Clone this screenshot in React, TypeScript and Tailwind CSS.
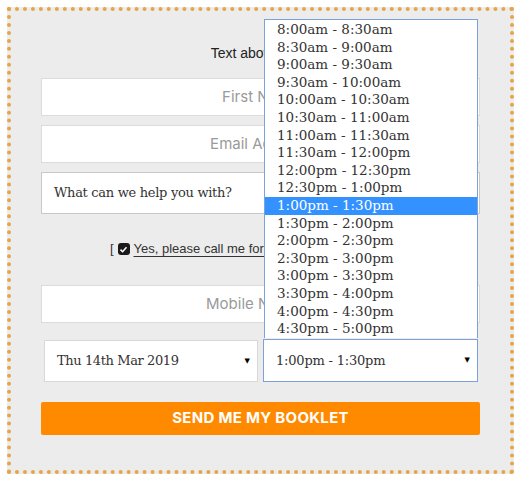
import { useState } from "react"

const slots = [
  "8:00am - 8:30am",
  "8:30am - 9:00am",
  "9:00am - 9:30am",
  "9:30am - 10:00am",
  "10:00am - 10:30am",
  "10:30am - 11:00am",
  "11:00am - 11:30am",
  "11:30am - 12:00pm",
  "12:00pm - 12:30pm",
  "12:30pm - 1:00pm",
  "1:00pm - 1:30pm",
  "1:30pm - 2:00pm",
  "2:00pm - 2:30pm",
  "2:30pm - 3:00pm",
  "3:00pm - 3:30pm",
  "3:30pm - 4:00pm",
  "4:00pm - 4:30pm",
  "4:30pm - 5:00pm",
]

const serif = "font-['DejaVu_Serif',serif]"
const sans = "font-['Inter',sans-serif]"

function Caret() {
  return <span className="text-[7px] leading-none text-black">▼</span>
}

export default function App() {
  const [slot, setSlot] = useState("1:00pm - 1:30pm")

  return (
    <div className="h-[481px] w-[520px] bg-white pl-[7px] pt-[7px]">
      <div className="relative h-[467px] w-[507px] border-4 border-dotted border-[#e6a548] bg-[#ececec] px-[30px]">
        <p className="mt-[34px] text-center font-['Liberation_Sans',sans-serif] text-[14px] leading-4 text-[#222]">
          Text above form
        </p>

        <div className="mt-[17px] flex flex-col gap-[9px]">
          <div className={`flex h-[38px] items-center justify-center border border-[#dcdcdc] bg-white text-[15px] text-[#9a9a9a] ${sans}`}>
            First Name
          </div>
          <div className={`flex h-[38px] items-center justify-center border border-[#dcdcdc] bg-white text-[15px] text-[#9a9a9a] ${sans}`}>
            Email Address
          </div>
          <div className={`flex h-[42px] items-center border border-[#c8c8c8] bg-white px-3 text-[13px] tracking-[-0.3px] text-[#333] ${serif}`}>
            What can we help you with?
          </div>
        </div>

        <div className="mt-[25px] flex h-5 items-center justify-center gap-[4px] pl-[10px] font-['Liberation_Sans',sans-serif] text-[13px] text-[#333]">
          <span>[</span>
          <span className="flex size-[12px] items-center justify-center rounded-[3px] bg-[#1a1a1a]">
            <svg viewBox="0 0 12 12" className="size-[9px]">
              <path d="M2 6.2 L4.8 9 L10 3" fill="none" stroke="white" strokeWidth="2" />
            </svg>
          </span>
          <span className="underline underline-offset-[3px]">Yes, please call me for a free phone consultation</span>
          <span>]</span>
        </div>

        <div className={`mt-[26px] flex h-[38px] items-center justify-center border border-[#dcdcdc] bg-white text-[15px] text-[#9a9a9a] ${sans}`}>
          Mobile Number
        </div>

        <div className={`mt-[16px] flex items-start gap-[5px] pl-[3px] text-[13px] text-[#333] ${serif}`}>
          <div className="mt-[1px] flex h-[42px] w-[214px] items-center justify-between border border-[#d8d8d8] bg-white pl-3 pr-[7px]">
            <span className="tracking-[-0.4px]">Thu 14th Mar 2019</span>
            <Caret />
          </div>
          <div className="flex h-[43px] w-[215px] items-center justify-between border border-[#7da2da] bg-white pl-3 pr-[7px]">
            <span className="tracking-[-0.2px]">{slot}</span>
            <Caret />
          </div>
        </div>

        <button
          type="button"
          className={`mt-[20px] flex h-[33px] w-full items-center justify-center rounded-[2px] bg-[#ff8a00] text-[15px] font-bold tracking-[0.3px] text-white ${sans}`}
        >
          SEND ME MY BOOKLET
        </button>

        <ul
          className={`absolute left-[253px] top-[8px] w-[214px] border border-b-0 border-[#7da2da] bg-white pt-[1px] text-[13.5px] leading-[17.6px] text-[#333] ${serif}`}
        >
          {slots.map((s) => (
            <li
              key={s}
              onClick={() => setSlot(s)}
              className={`px-3 ${s === slot ? "bg-[#3392ff] text-white" : ""}`}
            >
              {s}
            </li>
          ))}
        </ul>
      </div>
    </div>
  )
}
